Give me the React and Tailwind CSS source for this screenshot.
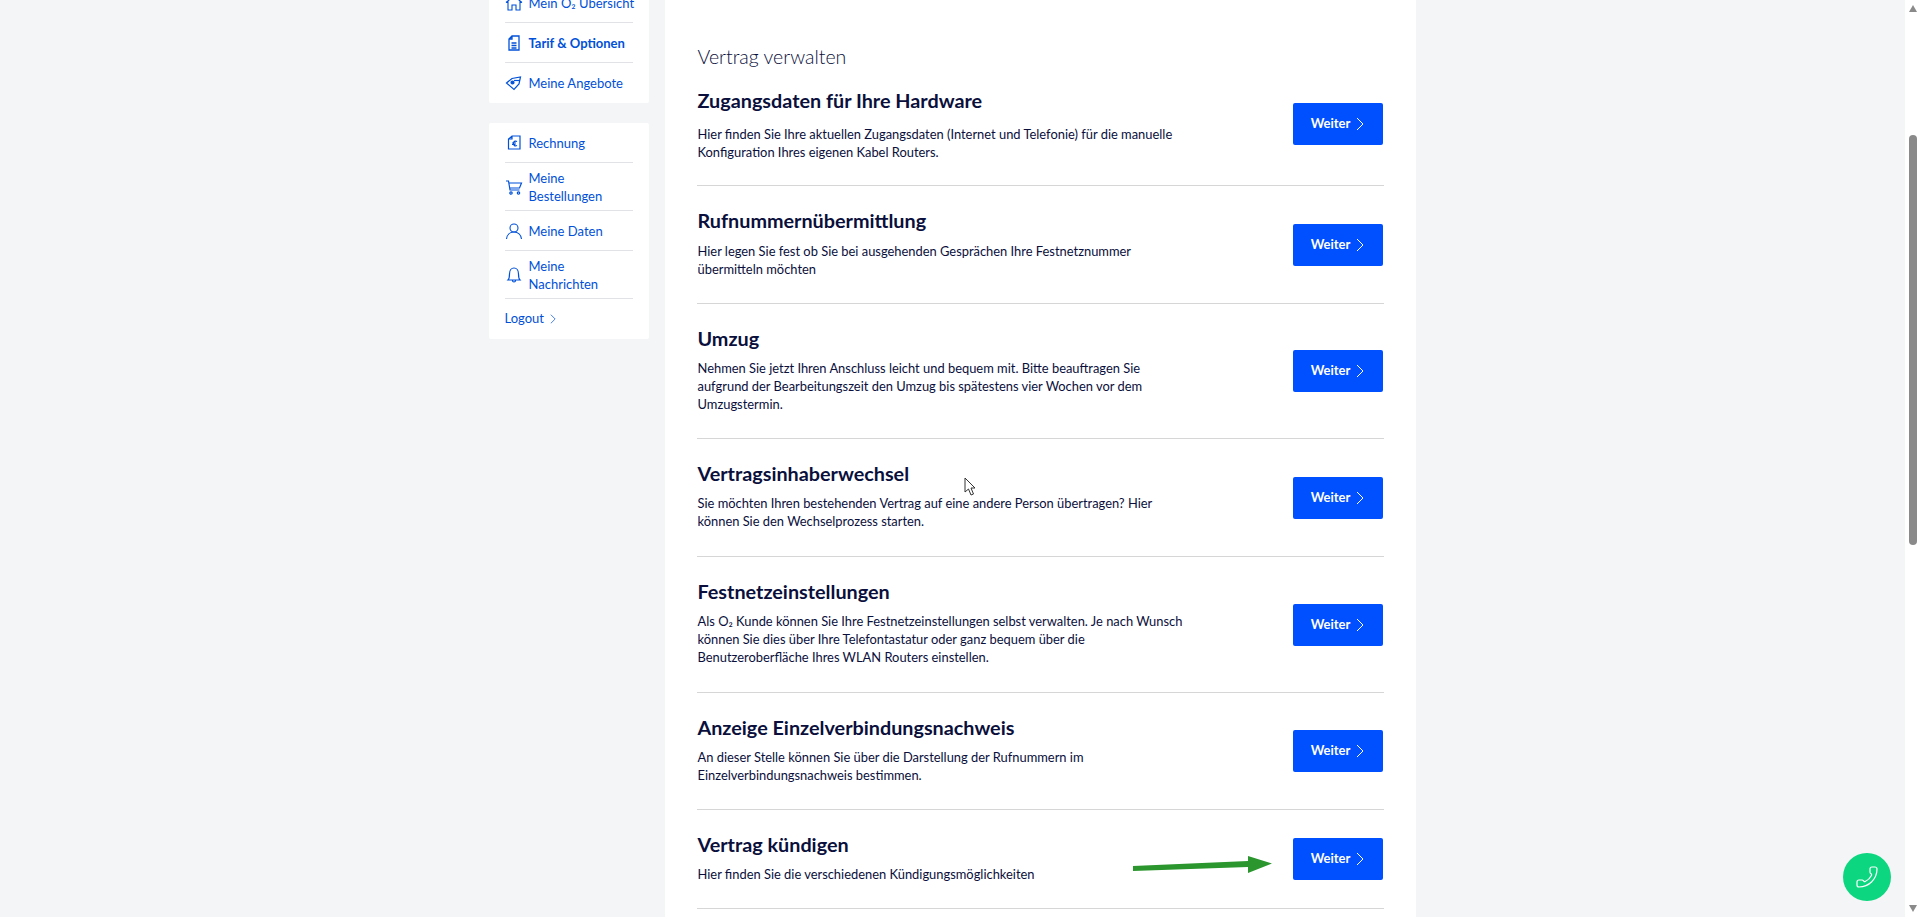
import React from 'react';
import { Phone } from 'lucide-react';

const HomeIcon = () => (
  <svg width="18" height="18" viewBox="0 0 18 18" fill="none" stroke="currentColor" strokeWidth="1.1">
    <path d="M1 8.500 9 2l8 6.500M3 7v9h4v-5h4v5h4V7" />
  </svg>
);
const DocIcon = () => (
  <svg width="18" height="18" viewBox="0 0 18 18" fill="none" stroke="currentColor" strokeWidth="1.3">
    <path d="M7 2h7v14H4V5zM7 2v3H4M6.500 9h5M6.500 11.500h5M6.500 14h5" />
  </svg>
);
const TagIcon = () => (
  <svg width="18" height="18" viewBox="0 0 18 18" fill="none" stroke="currentColor" strokeWidth="1.2">
    <path d="M1.500 9 7 4.500l8.500-1.500-1.500 7-5 5.500z" />
    <circle cx="7.500" cy="8.500" r="1.500" fill="currentColor" />
    <path d="M9 6.500h6" />
  </svg>
);
const BillIcon = () => (
  <svg width="18" height="18" viewBox="0 0 18 18" fill="none" stroke="currentColor" strokeWidth="1.2">
    <path d="M7 2h8v13H3.500V5zM7 2v3H3.500" />
    <path d="M12 7.500c-2-1-3.500 0-3.500 2s1.500 3 3.500 2M7 9h4M7 10.500h3.500" />
  </svg>
);
const CartIcon = () => (
  <svg width="18" height="18" viewBox="0 0 18 18" fill="none" stroke="currentColor" strokeWidth="1.2">
    <path d="M1 3h2.500l1.500 9h9.500M4 5h12.500l-2 5H4.800" />
    <circle cx="6" cy="15" r="1.200" />
    <circle cx="13.500" cy="15" r="1.200" />
  </svg>
);
const UserIcon = () => (
  <svg width="18" height="18" viewBox="0 0 18 18" fill="none" stroke="currentColor" strokeWidth="1.1">
    <circle cx="9" cy="6" r="4" />
    <path d="M1.500 17c.5-4 3.500-7 7.500-7s7 3 7.500 7" />
  </svg>
);
const BellIcon = () => (
  <svg width="18" height="18" viewBox="0 0 18 18" fill="none" stroke="currentColor" strokeWidth="1.2">
    <path d="M3 14c1-1 1.500-2.500 1.500-6C4.500 4.500 6.500 2 9 2s4.500 2.500 4.500 6c0 3.500.5 5 1.500 6zM7.500 14.500c0 2 3 2 3 0" />
  </svg>
);
const Chevron = ({ h = 14 }) => (
  <svg width={h / 2 + 1} height={h} viewBox="0 0 8 14" fill="none" stroke="currentColor" strokeWidth="1">
    <path d="M1 1l6 6-6 6" />
  </svg>
);

const NavItem = ({ icon, bold, children }) => (
  <div className="flex items-center gap-[6px] border-b border-[#e0e2e5] min-h-[40px] py-[5.5px] last:border-b-0 text-[#0050d8]">
    <span className="flex w-[18px] shrink-0 justify-center">{icon}</span>
    <span className={`whitespace-nowrap text-[13px] leading-[18px] ${bold ? 'font-bold' : ''}`}>{children}</span>
  </div>
);

const rows = [
  { title: 'Zugangsdaten für Ihre Hardware', text: ['Hier finden Sie Ihre aktuellen Zugangsdaten (Internet und Telefonie) für die manuelle', 'Konfiguration Ihres eigenen Kabel Routers.'], h: 'h-[116px]', pad: 'pt-[16px]', gap: 'mt-[11px]', btn: '-mt-[8px]' },
  { title: 'Rufnummernübermittlung', text: ['Hier legen Sie fest ob Sie bei ausgehenden Gesprächen Ihre Festnetznummer', 'übermitteln möchten'], h: 'h-[118px]', pad: 'pt-[20px]', gap: 'mt-[8px]' },
  { title: 'Umzug', text: ['Nehmen Sie jetzt Ihren Anschluss leicht und bequem mit. Bitte beauftragen Sie', 'aufgrund der Bearbeitungszeit den Umzug bis spätestens vier Wochen vor dem', 'Umzugstermin.'], h: 'h-[135px]', pad: 'pt-[20px]', gap: 'mt-[7px]' },
  { title: 'Vertragsinhaberwechsel', text: ['Sie möchten Ihren bestehenden Vertrag auf eine andere Person übertragen? Hier', 'können Sie den Wechselprozess starten.'], h: 'h-[118px]', pad: 'pt-[20px]', gap: 'mt-[7px]' },
  { title: 'Festnetzeinstellungen', text: ['Als O₂ Kunde können Sie Ihre Festnetzeinstellungen selbst verwalten. Je nach Wunsch', 'können Sie dies über Ihre Telefontastatur oder ganz bequem über die', 'Benutzeroberfläche Ihres WLAN Routers einstellen.'], h: 'h-[136px]', pad: 'pt-[20px]', gap: 'mt-[7px]' },
  { title: 'Anzeige Einzelverbindungsnachweis', text: ['An dieser Stelle können Sie über die Darstellung der Rufnummern im', 'Einzelverbindungsnachweis bestimmen.'], h: 'h-[117px]', pad: 'pt-[20px]', gap: 'mt-[7px]' },
  { title: 'Vertrag kündigen', text: ['Hier finden Sie die verschiedenen Kündigungsmöglichkeiten'], h: 'h-[99px]', pad: 'pt-[20px]', gap: 'mt-[7px]' },
];

const Row = ({ title, text, h, pad, gap, btn = '' }) => (
  <div className={`flex items-center justify-between border-b border-[#d6d6d6] ${h}`}>
    <div className={`flex flex-col self-start pl-[1px] ${pad}`}>
      <h3 className="text-[19.8px] leading-[28px] font-bold text-[#0a0f3c]">{title}</h3>
      <p className={`text-[12.9px] leading-[18px] text-[#0a0f3c] ${gap}`}>
        {text.map((t) => <span key={t} className="block">{t}</span>)}
      </p>
    </div>
    <button className={`mr-px flex h-[42px] w-[90px] items-center justify-center gap-[6px] rounded-[2px] bg-[#0050ff] text-[13px] font-bold text-white ${btn}`}>
      Weiter <Chevron />
    </button>
  </div>
);

const App = () => {
  return (
    <div className="relative flex h-[917px] w-[1920px] overflow-hidden bg-[#f4f5f7] font-['Lato',sans-serif]">
      <div className="flex flex-1 justify-center gap-[16px] pr-[1px]">
        {/* Sidebar */}
        <aside className="flex w-[160px] flex-col gap-[20px] -mt-[17px]">
          <div className="rounded-[2px] bg-white px-[16px]">
            <NavItem icon={<HomeIcon />}>Mein O₂ Übersicht</NavItem>
            <NavItem icon={<DocIcon />} bold>Tarif &amp; Optionen</NavItem>
            <NavItem icon={<TagIcon />}>Meine Angebote</NavItem>
          </div>
          <div className="rounded-[2px] bg-white px-[16px]">
            <NavItem icon={<BillIcon />}>Rechnung</NavItem>
            <NavItem icon={<CartIcon />}>
              Meine<br />Bestellungen
            </NavItem>
            <NavItem icon={<UserIcon />}>Meine Daten</NavItem>
            <NavItem icon={<BellIcon />}>
              Meine<br />Nachrichten
            </NavItem>
            <div className="flex h-[40px] items-center gap-[6px] text-[13px] text-[#0050d8]">
              Logout <Chevron h={10} />
            </div>
          </div>
        </aside>

        {/* Main card */}
        <main className="w-[751px] bg-white px-[32px] pt-[43px]">
          <h2 className="pl-[1px] text-[19.5px] leading-[27px] font-light text-[#0a0f3c]">Vertrag verwalten</h2>
          {rows.map((r) => <Row key={r.title} {...r} />)}
        </main>
      </div>

      {/* Scrollbar */}
      <div className="flex w-[15px] shrink-0 flex-col items-center bg-white">
        <div className="mt-[5px] h-0 w-0 border-x-[4.5px] border-b-[7px] border-x-transparent border-b-[#8a8a8a]" />
        <div className="mt-[123px] h-[410px] w-[8px] rounded-full bg-[#8a8a8a]" />
        <div className="mt-auto mb-[5px] h-0 w-0 border-x-[4.5px] border-t-[7px] border-x-transparent border-t-[#8a8a8a]" />
      </div>

      {/* Annotation arrow */}
      <svg className="absolute left-[1130px] top-[852px]" width="145" height="30" viewBox="0 0 145 30">
        <path d="M3 14 118 9 118 4 142 11.500 118 21 118 15 3 19z" fill="#2a962d" />
      </svg>

      {/* Mouse cursor */}
      <svg className="absolute left-[964px] top-[477px]" width="13" height="20" viewBox="0 0 13 20" fill="white" stroke="#333" strokeWidth="1">
        <path d="M1 1v14l3.500-3 2.500 6 2.500-1-2.500-6H11z" />
      </svg>

      {/* Call button */}
      <div className="absolute left-[1843px] top-[853px] flex h-[48px] w-[48px] items-center justify-center rounded-full bg-[#0cd67f] text-white">
        <Phone size={24} strokeWidth={1.2} className="-scale-x-100" />
      </div>
    </div>
  );
};

export default App;
